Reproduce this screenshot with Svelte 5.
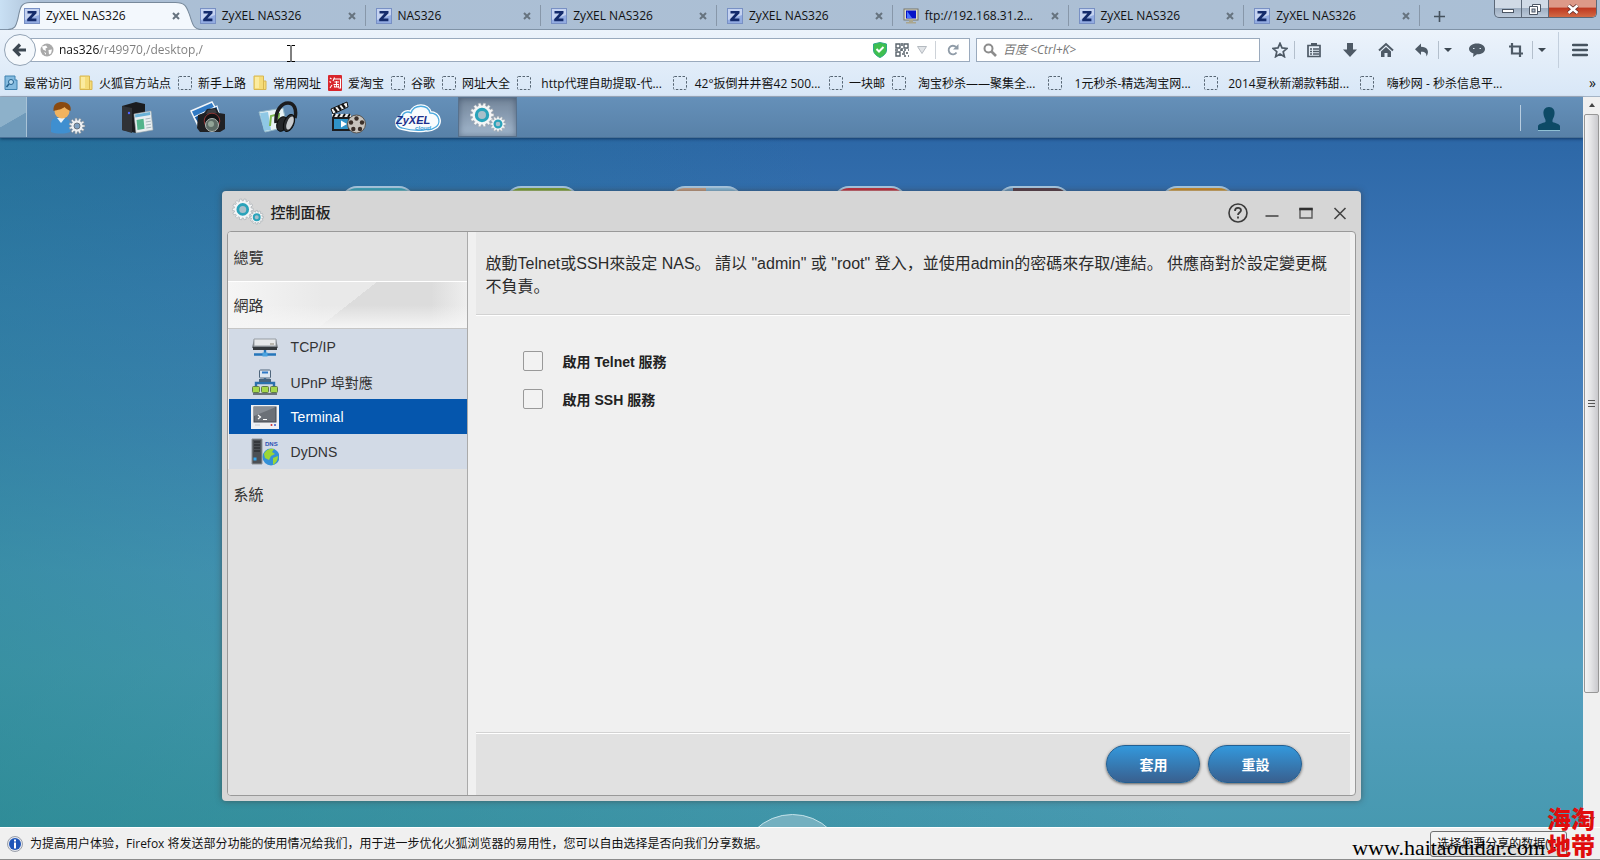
<script>
  const tabs = [
    { title: 'ZyXEL NAS326', icon: 'z' },
    { title: 'ZyXEL NAS326', icon: 'z' },
    { title: 'NAS326', icon: 'z' },
    { title: 'ZyXEL NAS326', icon: 'z' },
    { title: 'ZyXEL NAS326', icon: 'z' },
    { title: 'ftp://192.168.31.2...', icon: 'pc' },
    { title: 'ZyXEL NAS326', icon: 'z' },
    { title: 'ZyXEL NAS326', icon: 'z' }
  ];

  const bookmarks = [
    { label: '最常访问', icon: 'recent' },
    { label: '火狐官方站点', icon: 'folder' },
    { label: '新手上路', icon: 'blank' },
    { label: '常用网址', icon: 'folder' },
    { label: '爱淘宝', icon: 'tao' },
    { label: '谷歌', icon: 'blank' },
    { label: '网址大全', icon: 'blank' },
    { label: 'http代理自助提取-代...', icon: 'blank', wide: true },
    { label: '42°扳倒井井窖42 500...', icon: 'blank', wide: true },
    { label: '一块邮', icon: 'blank' },
    { label: '淘宝秒杀——聚集全...', icon: 'blank', wide: true },
    { label: '1元秒杀-精选淘宝网...', icon: 'blank', wide: true },
    { label: '2014夏秋新潮款韩甜...', icon: 'blank', wide: true },
    { label: '嗨秒网 - 秒杀信息平...', icon: 'blank', wide: true }
  ];

  const apps = [
    { id: 'users', name: '使用者' },
    { id: 'storage', name: '檔案' },
    { id: 'photo', name: '相片' },
    { id: 'music', name: '音樂' },
    { id: 'video', name: '影片' },
    { id: 'cloud', name: 'ZyXEL Cloud' },
    { id: 'gears', name: '控制面板' }
  ];

  const launchers = ['cyan', 'green', 'orange', 'red', 'dark', 'amber'];

  const networkItems = [
    { id: 'tcpip', label: 'TCP/IP' },
    { id: 'upnp', label: 'UPnP 埠對應' },
    { id: 'terminal', label: 'Terminal' },
    { id: 'dydns', label: 'DyDNS' }
  ];

  let address = 'nas326/r49970,/desktop,/';
  let search = '';
  let activeTab = 0;
  let activeApp = 'gears';
  let activeItem = 'terminal';
  let telnet = false;
  let ssh = false;

  function reset() {
    telnet = false;
    ssh = false;
  }

  // outline of a cog wheel with square-ish teeth
  function cog(cx, cy, outer, inner, teeth) {
    const step = (Math.PI * 2) / teeth;
    const points = [];
    for (let i = 0; i < teeth; i++) {
      const a = i * step;
      [[-0.34, inner], [-0.22, outer], [0.22, outer], [0.34, inner]].forEach(([k, r]) => {
        points.push((cx + Math.cos(a + k * step) * r).toFixed(2) + ' ' + (cy + Math.sin(a + k * step) * r).toFixed(2));
      });
    }
    return 'M' + points.join('L') + 'Z';
  }
</script>

<svelte:head>
  <title>ZyXEL NAS326</title>
</svelte:head>

{#snippet gears()}
  <svg class="gears" viewBox="0 0 36 32" aria-hidden="true">
    <path d={cog(12, 13, 12, 9.8, 14)} fill="#f4f5f6" stroke="#9aa3a9" stroke-width=".6" />
    <circle cx="12" cy="13" r="5.6" fill="#a9bfca" stroke="#2aa3ba" stroke-width="3.2" />
    <path d={cog(28, 22, 7.8, 6.1, 12)} fill="#f4f5f6" stroke="#9aa3a9" stroke-width=".6" />
    <circle cx="28" cy="22" r="3.4" fill="#a9bfca" stroke="#2aa3ba" stroke-width="2.2" />
  </svg>
{/snippet}

{#snippet favicon(kind)}
  {#if kind === 'z'}
    <svg class="fav" viewBox="0 0 16 16" aria-hidden="true">
      <rect x=".5" y=".5" width="15" height="15" fill="#93ace2" stroke="#7890c4" />
      <path d="M1 1h14v6L1 12z" fill="#c5d3f1" />
      <path d="M3.5 3h9v2.2L7.4 10.6h5v2.6H3.2V11l5.2-5.4H3.5z" fill="#142b6c" />
    </svg>
  {:else}
    <svg class="fav" viewBox="0 0 16 16" aria-hidden="true">
      <rect x="1" y="1" width="14" height="11" fill="#e2dfcb" stroke="#77766b" />
      <rect x="3" y="2.5" width="10" height="8" fill="#0713c8" />
      <path d="M4 3l5 7H4z" fill="#4c75ff" />
      <path d="M6 12h4v2h3v1.5H3V14h3z" fill="#aaa68e" />
    </svg>
  {/if}
{/snippet}

{#snippet bookmarkIcon(kind)}
  <svg class="bm-icon" viewBox="0 0 14 16" aria-hidden="true">
    {#if kind === 'recent'}
      <path d="M1 1h10v4h2v9.500H1z" fill="#84bbe0" stroke="#3f82b0" />
      <circle cx="7" cy="7" r="2.500" fill="#b9dcf2" stroke="#23618e" />
      <path d="M5 9l-2.500 3" stroke="#23618e" stroke-width="1.500" />
    {:else if kind === 'folder'}
      <path d="M1 1h9.500v5H13v8.500H1z" fill="#f5dc79" stroke="#d8b650" />
      <path d="M2 2h4v11H2z" fill="#fbeba0" />
      <path d="M10.500 6v8" stroke="#d8b650" />
    {:else if kind === 'tao'}
      <rect width="14" height="16" rx="1" fill="#d8262c" />
      <path d="M2 3l1.500 1M1.500 6.500l1.500 1M2 13l2-3M6.500 2.500L5 6M6 4h6.500v9h-2M6.500 7h4.500M5.500 9.500h5.500M8.500 6v6M6.500 10.500V12h4v-1.500" fill="none" stroke="#fff" stroke-width="1.100" />
    {:else}
      <rect x=".5" y="1.500" width="13" height="13" rx="1" fill="none" stroke="#566573" stroke-dasharray="2.500 1.500" />
    {/if}
  </svg>
{/snippet}

{#snippet appIcon(id)}
  {#if id === 'users'}
    <svg class="app-icon" viewBox="0 0 36 34" aria-hidden="true">
      <path d="M1 31V23c0-5 4-7 9-7s10 2 10 7v8c-5 2-14 2-19 0z" fill="#3f8fd0" />
      <path d="M7 17l4 5 4-5z" fill="#e9f4fc" />
      <circle cx="12" cy="10" r="7.500" fill="#f1b35f" />
      <path d="M3.500 10C3 3 7 1 12 1s10 3 8.500 9c-3-1-5-3-6-4-2 2-7 3-11 4z" fill="#8a4a10" />
      <path d={cog(27, 25, 8, 5.800, 11)} fill="#eef1f4" stroke="#7d8891" stroke-width=".6" />
      <circle cx="27" cy="25" r="3" fill="#7d9fc0" stroke="#69747e" />
    </svg>
  {:else if id === 'storage'}
    <svg class="app-icon" viewBox="0 0 36 34" aria-hidden="true">
      <path d="M2 5l14-4 9 2v25l-9 4-14-3z" fill="#1b1c1f" />
      <path d="M2 5l10 2v25L2 29z" fill="#303236" />
      <circle cx="9" cy="12" r="1.200" fill="#5166ff" />
      <path d="M14 13l17-3 2 19-17 3z" fill="#e9eef0" stroke="#9fa9ad" stroke-width=".6" />
      <path d="M15 13.500l15-2.600.3 3-15 2.600z" fill="#6ab1d6" />
      <path d="M16.500 19l7-1.200 1 10-7 1.200z" fill="#53b48b" />
      <path d="M25.500 18l5-.8M25.800 21l5-.8M26 24l5-.8M26.300 27l5-.8" stroke="#a9b8bd" />
    </svg>
  {:else if id === 'photo'}
    <svg class="app-icon" viewBox="0 0 36 34" aria-hidden="true">
      <path d="M1 10L22 1l5 9-19 15z" fill="#2f79c4" stroke="#f2f6fa" stroke-width="1.400" />
      <path d="M4 16L27 5l3 11-20 10z" fill="#175a9f" stroke="#f2f6fa" stroke-width="1.200" />
      <path d="M8 14l6-2 3-4 9-1 3 5 6 1v15l-5 3H10l-3-4z" fill="#202124" />
      <path d="M18 9l7-1 2 4-11 1z" fill="#3b3d41" />
      <circle cx="22" cy="20" r="7.800" fill="#121315" stroke="#8d3636" />
      <circle cx="22" cy="24" r="6.500" fill="#5d6b66" stroke="#b1b7b4" />
      <circle cx="21" cy="23" r="3" fill="#93a598" />
    </svg>
  {:else if id === 'music'}
    <svg class="app-icon wide" viewBox="0 0 40 34" aria-hidden="true">
      <path d="M1 11l24-4 4 19-22 5z" fill="#e9f3f6" stroke="#93b8c9" />
      <path d="M2 12l8-1 3 18-7 1z" fill="#8fc8e5" />
      <path d="M12 25l1-10 8-2-1 10" fill="none" stroke="#7db84f" stroke-width="2" />
      <path d="M18 22C17 9 24 2 30 2s9 6 7 15" fill="none" stroke="#1b1c1e" stroke-width="3.500" />
      <ellipse cx="24" cy="23" rx="5" ry="7.500" transform="rotate(20 24 23)" fill="#25272a" stroke="#0b0c0c" />
      <ellipse cx="31" cy="22" rx="5" ry="9" transform="rotate(22 31 22)" fill="#2a2c2f" stroke="#0b0c0c" />
      <ellipse cx="32" cy="22" rx="3" ry="7" transform="rotate(22 32 22)" fill="#c9cccf" />
    </svg>
  {:else if id === 'video'}
    <svg class="app-icon" viewBox="0 0 36 34" aria-hidden="true">
      <path d="M1 8L17 1l1 5L3 13z" fill="#f2f3f3" stroke="#111" />
      <path d="M4 7l3 4M8 5l3 4M12 3l3 4" stroke="#111" stroke-width="2.400" />
      <path d="M2 13h19v17H2z" fill="#1c1d1f" />
      <path d="M2 13h19v3H2z" fill="#efefef" />
      <path d="M5 13l-2 3M10 13l-2 3M15 13l-2 3M20 13l-2 3" stroke="#111" stroke-width="2" />
      <path d="M4 18h14v10H4z" fill="#2f93c8" />
      <path d="M11 19.500v7l6-3.500z" fill="#fff" />
      <circle cx="26.500" cy="23" r="9" fill="#c7c3bd" stroke="#5b5650" />
      <g fill="#3a2f29">
        <circle cx="26.500" cy="17.500" r="2.200" /><circle cx="21" cy="21.500" r="2.200" />
        <circle cx="32" cy="21.500" r="2.200" /><circle cx="23.300" cy="28" r="2.200" /><circle cx="30" cy="28" r="2.200" />
      </g>
    </svg>
  {:else if id === 'cloud'}
    <svg class="app-icon cloud" viewBox="0 0 46 30" aria-hidden="true">
      <path d="M7 25c-6-1-7-9 0-11 1-5 6-6 9-4 3-9 17-9 19 0 10 0 12 12 4 15-4 3-8 1-10 2-8 1-15 0-22-2z" fill="#f8fbfd" stroke="#fff" stroke-width="4" />
      <path d="M7 25c-6-1-7-9 0-11 1-5 6-6 9-4 3-9 17-9 19 0 10 0 12 12 4 15-4 3-8 1-10 2-8 1-15 0-22-2z" fill="#f8fbfd" stroke="#4ba9df" stroke-width="1.300" />
      <text x="1" y="21" class="zyxel">ZyXEL</text>
      <text x="20" y="27" class="zcloud">cloud</text>
    </svg>
  {:else}
    {@render gears()}
  {/if}
{/snippet}

{#snippet itemIcon(id)}
  <svg class="item-icon" viewBox="0 0 28 28" aria-hidden="true">
    {#if id === 'tcpip'}
      <path d="M3 6h22l2 9H1z" fill="#6c7379" />
      <path d="M3 6h22v7H3z" fill="#e6e8ea" stroke="#979da3" />
      <path d="M2 14h24v3H2z" fill="#33383d" />
      <path d="M19 11h4" stroke="#8b8574" />
      <path d="M14 17v4M3 21.500h9M16 21.500h9" stroke="#2476ba" stroke-width="2.400" />
      <rect x="11.500" y="19.500" width="5" height="4" fill="#4aa3e0" />
    {:else if id === 'upnp'}
      <path d="M14 9v7M5 19v-4h18v4" fill="none" stroke="#2c71ad" stroke-width="2.400" />
      <rect x="8.500" y="2" width="11" height="8" rx="1" fill="#dce7f2" stroke="#50667c" />
      <path d="M11 4.500h6" stroke="#2f79c6" stroke-width="2" />
      <path d="M8 11h12v3H8z" fill="#48647e" />
      <g fill="#a5d84b" stroke="#607b4a">
        <rect x="1.500" y="18.500" width="7" height="6" rx="1" /><rect x="10.500" y="18.500" width="7" height="6" rx="1" />
        <rect x="19.500" y="18.500" width="7" height="6" rx="1" />
      </g>
      <path d="M2 26h24" stroke="#6c757c" stroke-width="2" />
    {:else if id === 'terminal'}
      <rect y="2" width="28" height="24" fill="#eff1f4" />
      <rect x="3" y="4" width="22" height="15" fill="#6b7077" stroke="#454a52" />
      <path d="M3 4h22L3 13z" fill="#888d94" />
      <path d="M7 12l2.500 2L7 16M12 16.500h4" fill="none" stroke="#fff" stroke-width="1.200" />
      <circle cx="20.500" cy="22" r="1" fill="#d12f2f" /><circle cx="24" cy="22" r="1" fill="#3657c9" />
      <path d="M4 22h5" stroke="#c9cdd4" />
    {:else}
      <path d="M1 1h10v25H1z" fill="#4c5055" stroke="#8c9298" />
      <path d="M3 4h6M3 7h6M3 10h6M3 13h6" stroke="#1f2124" />
      <rect x="2.500" y="19.500" width="3" height="3" fill="#37a6ee" />
      <circle cx="20" cy="19" r="8.500" fill="#3390d8" />
      <path d="M13 16c2-5 7-6 10-5l-2 3 3 2-4 2-2 4-4-2zM22 20l5-2c0 4-2 7-5 9z" fill="#9bd636" />
      <text x="14" y="8" class="dns">DNS</text>
    {/if}
  </svg>
{/snippet}

<div class="browser">
  <header class="chrome">
    <div class="tabstrip">
      {#each tabs as tab, i}
        <div class="tab" class:active={i === activeTab}>
          {#if i === activeTab}
            <svg class="tab-shape" viewBox="0 0 192 29" preserveAspectRatio="none" aria-hidden="true">
              <path d="M0 28.500C8 28 8 24 10 17C12 6 13 1.500 22 1.500H166C176 1.500 177 6 180 14C183 24 184 28.500 192 28.500" fill="#f3f8fd" stroke="#77899b" />
            </svg>
          {/if}
          <button class="tab-title" on:click={() => (activeTab = i)}>
            {@render favicon(tab.icon)}
            <span>{tab.title}</span>
          </button>
          <button class="tab-close" aria-label="关闭标签页">
            <svg viewBox="0 0 8 8" width="8" height="8"><path d="M1 1l6 6M7 1L1 7" stroke="#66737f" stroke-width="2" /></svg>
          </button>
        </div>
      {/each}
      <div class="strip-end">
        <button class="new-tab" aria-label="打开新标签页">
          <svg viewBox="0 0 11 11" width="11" height="11"><path d="M5.500 0v11M0 5.500h11" stroke="#45525e" stroke-width="1.600" /></svg>
        </button>
        <div class="win-buttons">
          <button aria-label="最小化">
            <svg viewBox="0 0 14 14" width="14" height="14"><rect x="1.500" y="7.500" width="11" height="3" fill="#fff" stroke="#4b5563" /></svg>
          </button>
          <button aria-label="还原">
            <svg viewBox="0 0 14 14" width="14" height="14"><path d="M4.500 2.500h8v7h-8z" fill="#fff" stroke="#4b5563" /><path d="M1.500 4.500h8v8h-8z" fill="#fff" stroke="#4b5563" /><rect x="4" y="7" width="3" height="3" fill="#b7c4d4" stroke="#4b5563" /></svg>
          </button>
          <button class="quit" aria-label="关闭">
            <svg viewBox="0 0 14 14" width="14" height="14"><path d="M2.500 3.500l9 7.500M11.500 3.500l-9 7.500" stroke="#5c2b28" stroke-width="4.200" /><path d="M2.500 3.500l9 7.500M11.500 3.500l-9 7.500" stroke="#fff" stroke-width="2.600" /></svg>
          </button>
        </div>
      </div>
    </div>

    <div class="navbar">
      <button class="back" aria-label="后退">
        <svg viewBox="0 0 16 16" width="16" height="16"><path d="M14 8H3M8 2.500L2.500 8 8 13.500" fill="none" stroke="#3d4852" stroke-width="3.200" /></svg>
      </button>
      <div class="urlbar">
        <svg viewBox="0 0 14 14" width="14" height="14" aria-hidden="true">
          <circle cx="7" cy="7" r="6.500" fill="#a9a9a9" />
          <path d="M2 3.500l4-1 1.500 2-2 1 .5 2.500-3-1.500zM8.500 7l3.500-.5-1 4-2 1zM4 9l2 1v2z" fill="#fff" />
        </svg>
        <input class="address" type="text" aria-label="地址" bind:value={address} />
        <svg viewBox="0 0 14 16" width="14" height="16" aria-hidden="true">
          <path d="M7 .5l6.500 1.500V8c0 3.500-3 6-6.500 7.500C3.500 14 .5 11.500 .5 8V2z" fill="#3fbf4f" stroke="#2fa98b" />
          <path d="M3.500 7L6 9.500 10.500 5" fill="none" stroke="#fff" stroke-width="2" />
        </svg>
        <svg class="qr" viewBox="0 0 14 14" width="14" height="14" aria-hidden="true">
          <path d="M1 1h4v4H1zM9 1h4v4H9zM1 9h4v4H1z" fill="none" stroke="#59636b" stroke-width="1.400" />
          <path d="M7 0v3M7 5v3M0 7h3M5 7h2M9 7h2M13 7h1M8 9h2M12 9v2M7 11h3M9 13h2M13 13h1" stroke="#59636b" stroke-width="1.600" />
        </svg>
        <svg viewBox="0 0 10 8" width="10" height="8" aria-hidden="true"><path d="M.5.5h9L5 7.500z" fill="#e1e4e7" stroke="#b4bac0" /></svg>
        <button class="reload" aria-label="刷新">
          <svg viewBox="0 0 12 12" width="12" height="12"><path d="M9.500 8.500A4.300 4.300 0 1 1 9 3" fill="none" stroke="#8f9ba7" stroke-width="1.800" /><path d="M11.500 0v5.500H6z" fill="#8f9ba7" /></svg>
        </button>
      </div>
      <div class="searchbar">
        <svg viewBox="0 0 14 14" width="14" height="14" aria-hidden="true"><circle cx="5.500" cy="5.500" r="4" fill="none" stroke="#8c8c8c" stroke-width="2" /><path d="M8.500 8.500l4.500 4.500" stroke="#8c8c8c" stroke-width="2.600" /></svg>
        <input type="text" aria-label="搜索" placeholder="百度 <Ctrl+K>" bind:value={search} />
      </div>
      <div class="tools">
        <button class="star ruled" aria-label="收藏"><svg viewBox="0 0 16 16"><path d="M8 1.300l2 4.600 5 .5-3.800 3.300 1.200 5L8 12.100l-4.400 2.600 1.200-5L1 6.400l5-.5z" fill="none" stroke="#4e5a66" stroke-width="1.700" /></svg></button>
        <button aria-label="书签"><svg viewBox="0 0 16 16"><path d="M2 3.500h12v11H2z" fill="none" stroke="#4e5a66" stroke-width="1.700" /><path d="M5 1h6v3H5z" fill="#4e5a66" /><path d="M4 7h2M7 7h6M4 9.500h2M7 9.500h6M4 12h2M7 12h6" stroke="#4e5a66" stroke-width="1.300" /></svg></button>
        <button aria-label="下载"><svg viewBox="0 0 16 16"><path d="M5 1h6v6.500h4L8 15 1 7.500h4z" fill="#4e5a66" /></svg></button>
        <button aria-label="主页"><svg viewBox="0 0 16 16"><path d="M1 8.500L8 2l7 6.500" fill="none" stroke="#4e5a66" stroke-width="2" /><path d="M3 9.500L8 5l5 4.500V15H9.500v-4h-3v4H3z" fill="#4e5a66" /></svg></button>
        <button class="ruled" aria-label="撤销"><svg viewBox="0 0 16 16"><path d="M7 1.500v3.300c6 0 9 4 5.500 9.700C12.500 11 11 9.600 7 9.800V13L1 7.200z" fill="#4e5a66" /></svg></button>
        <button class="caret" aria-label="更多撤销"><svg viewBox="0 0 16 16"><path d="M4 6h8l-4 4z" fill="#3d4852" /></svg></button>
        <button class="chat" aria-label="聊天"><svg viewBox="0 0 16 16"><path d="M8 1.500c5 0 8 2.500 8 5.500 0 3.500-4 5.500-8 5.300L4 15l.5-3.500C2 10.500 0 9 0 7c0-3 3-5.500 8-5.500z" fill="#4e5a66" /><path d="M4 6.500h1.500M10.500 6.500H12" stroke="#dbe7f3" /></svg></button>
        <button class="ruled" aria-label="截图"><svg viewBox="0 0 16 16"><path d="M4 1v10.500h11M1 4.500h11V15" fill="none" stroke="#4e5a66" stroke-width="2.200" /></svg></button>
        <button class="caret" aria-label="更多截图"><svg viewBox="0 0 16 16"><path d="M4 6h8l-4 4z" fill="#3d4852" /></svg></button>
        <button class="menu" aria-label="菜单"><svg viewBox="0 0 16 16"><path d="M1 3h14M1 8h14M1 13h14" stroke="#46535f" stroke-width="2.400" stroke-linecap="round" /></svg></button>
      </div>
      <svg class="ibeam" viewBox="0 0 8 17" width="8" height="17" aria-hidden="true"><path d="M0 .5h3.500M4.500.5H8M4 1v15M0 16.500h3.500M4.500 16.500H8" stroke="#000" /></svg>
    </div>

    <nav class="bookmarks">
      {#each bookmarks as b}
        <a href="#bookmark" class="bookmark" class:wide={b.wide}>
          {@render bookmarkIcon(b.icon)}
          <span>{b.label}</span>
        </a>
      {/each}
      <button class="more" aria-label="更多书签">»</button>
    </nav>
  </header>

  <div class="viewport">
    <main class="nas">
      <div class="taskbar">
        <button class="show-desktop" aria-label="顯示桌面"></button>
        <div class="apps">
          {#each apps as app}
            <button class="app" class:active={activeApp === app.id} aria-label={app.name} on:click={() => (activeApp = app.id)}>
              {@render appIcon(app.id)}
            </button>
          {/each}
        </div>
        <button class="account" aria-label="帳號">
          <svg viewBox="0 0 22 24" width="22" height="24"><path d="M11 0c4 0 6 3 5.500 7-.3 3-1.500 4-2 6v2c3 1 7 2 7.500 4v4H0v-4c.5-2 4.500-3 7.500-4v-2c-.5-2-1.700-3-2-6C5 3 7 0 11 0z" fill="#0d4a66" /><path d="M0 23.500h22" stroke="#8fc0d4" /></svg>
        </button>
      </div>

      <div class="desktop">
        <div class="launchers">
          {#each launchers as color}
            <span class="launcher {color}"></span>
          {/each}
        </div>

        <section class="window">
          <div class="titlebar">
            {@render gears()}
            <h1>控制面板</h1>
            <div class="controls">
              <button aria-label="說明"><svg viewBox="0 0 20 20"><circle cx="10" cy="10" r="9" fill="none" stroke="#3b3b3b" stroke-width="1.600" /><path d="M7 8c0-4 6-4 6-.7 0 2.200-3 2.200-3 4.700M10 13.500V15.500" fill="none" stroke="#3b3b3b" stroke-width="1.800" /></svg></button>
              <button aria-label="最小化"><svg viewBox="0 0 20 20"><path d="M3.500 13h13" stroke="#4a4a4a" stroke-width="1.600" /></svg></button>
              <button aria-label="最大化"><svg viewBox="0 0 20 20"><path d="M4 6h12v9H4z" fill="none" stroke="#5a5a5a" stroke-width="1.400" /><path d="M3.300 6h13.400" stroke="#2f2f2f" stroke-width="2.600" /></svg></button>
              <button aria-label="關閉"><svg viewBox="0 0 20 20"><path d="M4.500 5l11 11M15.500 5l-11 11" stroke="#444" stroke-width="1.600" /></svg></button>
            </div>
          </div>

          <div class="body">
            <aside class="sidebar">
              <button class="group">總覽</button>
              <button class="group open">網路</button>
              <ul>
                {#each networkItems as item}
                  <li>
                    <button class="item" class:active={activeItem === item.id} on:click={() => (activeItem = item.id)}>
                      {@render itemIcon(item.id)}
                      {item.label}
                    </button>
                  </li>
                {/each}
              </ul>
              <button class="group">系統</button>
            </aside>

            <form class="content" on:submit|preventDefault>
              <p class="description">啟動Telnet或SSH來設定 NAS。 請以 "admin" 或 "root" 登入，並使用admin的密碼來存取/連結。 供應商對於設定變更概不負責。</p>
              <div class="fields">
                <label><input type="checkbox" bind:checked={telnet} />啟用 Telnet 服務</label>
                <label><input type="checkbox" bind:checked={ssh} />啟用 SSH 服務</label>
              </div>
              <div class="actions">
                <button type="submit">套用</button>
                <button type="button" on:click={reset}>重設</button>
              </div>
            </form>
          </div>
        </section>

        <span class="dock"></span>
      </div>
    </main>

    <div class="scrollbar" aria-hidden="true">
      <svg viewBox="0 0 16 16" width="16" height="16"><path d="M5 10l3-4 3 4z" fill="#444" /></svg>
      <div class="track"><div class="thumb"><i></i><i></i><i></i></div></div>
      <svg viewBox="0 0 16 16" width="16" height="16"><path d="M5 6l3 4 3-4z" fill="#444" /></svg>
    </div>
  </div>

  <footer class="notice">
    <svg viewBox="0 0 16 16" width="16" height="16" aria-hidden="true">
      <circle cx="8" cy="8" r="7.500" fill="#e8eaf0" stroke="#9ba0aa" /><circle cx="8" cy="8" r="6" fill="#1e55b8" />
      <path d="M8 3.500v2M8 6.500v6" stroke="#fff" stroke-width="2" />
    </svg>
    <p>为提高用户体验，Firefox 将发送部分功能的使用情况给我们，用于进一步优化火狐浏览器的易用性，您可以自由选择是否向我们分享数据。</p>
    <button>选择您要分享的数据(C)</button>
  </footer>

  <div class="watermark">
    <span class="site">www.haitaodidar.com</span>
    <span class="seal">海淘地带</span>
  </div>
</div>

<style>
  :global(body) {
    margin: 0;
  }

  .browser {
    position: relative;
    display: flex;
    flex-direction: column;
    min-height: 100vh;
    overflow: hidden;
    font-family: "Open Sans", "Noto Sans CJK SC", sans-serif;
    font-size: 12px;
    color: #111;
  }

  .browser * {
    box-sizing: border-box;
  }

  button {
    border: none;
    background: none;
    padding: 0;
    font: inherit;
    color: inherit;
    display: flex;
    align-items: center;
    justify-content: center;
  }

  input {
    font: inherit;
  }

  svg {
    flex: none;
    display: block;
  }

  /* browser chrome */
  .chrome {
    background: linear-gradient(#ecf3fb 30px, #d8e7f7);
    border-bottom: 1px solid #a5b4c5;
  }

  .tabstrip {
    display: flex;
    height: 30px;
    padding-left: 14px;
    background: linear-gradient(90deg, #c9e0f4, #abbfd5 40px, #acbfd4 80%, #a9bfd6);
    border-bottom: 1px solid #8093a7;
  }

  .tab {
    position: relative;
    display: flex;
    flex: 1;
    min-width: 0;
    align-items: center;
    padding: 2px 10px 0;
  }

  .tab:not(.active)::after {
    content: '';
    position: absolute;
    right: 0;
    top: 5px;
    height: 21px;
    border-right: 1px solid #8797a9;
  }

  .tab-shape {
    position: absolute;
    left: -6px;
    top: 1px;
    width: calc(100% + 18px);
    height: 29px;
  }

  .tab-title {
    position: relative;
    flex: 1;
    min-width: 0;
    justify-content: flex-start;
    gap: 6px;
    white-space: nowrap;
  }

  .tab-close {
    position: relative;
    width: 8px;
  }

  .fav {
    width: 16px;
    height: 16px;
  }

  .strip-end {
    display: flex;
    justify-content: space-between;
    align-items: flex-start;
    width: 180px;
    padding: 0 3px 0 14px;
  }

  .new-tab {
    height: 32px;
  }

  .win-buttons {
    display: flex;
    height: 18px;
    border: 1px solid #5b6878;
    border-top: none;
    border-radius: 0 0 5px 5px;
    overflow: hidden;
    background: linear-gradient(#d0dae6 45%, #9fafc2 50%, #bccada);
  }

  .win-buttons button {
    width: 27px;
    border-right: 1px solid #5b6878;
  }

  .win-buttons .quit {
    width: 47px;
    border-right: none;
    background: linear-gradient(#dd9988 40%, #bf3a22 50%, #d26a45);
  }

  .navbar {
    position: relative;
    display: flex;
    align-items: center;
    height: 41px;
    padding: 0 0 2px 4px;
  }

  .back {
    position: relative;
    z-index: 1;
    width: 32px;
    height: 32px;
    border: 1px solid #93a3b5;
    border-radius: 50%;
    background: #f4f8fc;
  }

  .urlbar,
  .searchbar {
    display: flex;
    align-items: center;
    height: 24px;
    background: #fff;
    border: 1px solid #9aaabd;
  }

  .urlbar {
    flex: 1;
    gap: 8px;
    margin-left: -8px;
    padding-left: 11px;
  }

  .searchbar {
    width: 284px;
    gap: 6px;
    margin-left: 6px;
    padding: 0 6px;
  }

  .urlbar input,
  .searchbar input {
    flex: 1;
    min-width: 0;
    border: none;
    outline: none;
    padding: 0;
    background: none;
  }

  /* host name is dark, the path after it is grey */
  .urlbar .address {
    margin-left: -3px;
    color: transparent;
    caret-color: #111;
    background: linear-gradient(90deg, #111 41px, #7c7c7c 41px);
    background-clip: text;
    -webkit-background-clip: text;
  }

  .searchbar input::placeholder {
    color: #777;
    font-style: italic;
    opacity: 1;
  }

  .reload {
    width: 34px;
    height: 18px;
    border-left: 1px solid #cdd2d8;
  }

  .tools {
    display: flex;
    align-items: center;
    padding-left: 4px;
  }

  .tools button {
    position: relative;
    width: 36px;
    height: 36px;
  }

  .tools svg {
    width: 16px;
    height: 16px;
  }

  .tools .star {
    width: 32px;
  }

  .tools .caret {
    width: 16px;
  }

  .tools .chat {
    width: 42px;
  }

  .tools .menu {
    width: 42px;
    margin-left: 8px;
    border-left: 1px solid #c3cfdd;
  }

  .tools .ruled::after {
    content: '';
    position: absolute;
    right: 1px;
    top: 9px;
    height: 18px;
    border-right: 1px solid #b3bfcc;
  }

  .ibeam {
    position: absolute;
    left: 287px;
    top: 15px;
  }

  .bookmarks {
    display: flex;
    align-items: center;
    height: 25px;
    padding: 0 4px 2px;
  }

  .bookmark {
    display: flex;
    align-items: center;
    gap: 6px;
    padding-right: 7px;
    color: #111;
    text-decoration: none;
    white-space: nowrap;
  }

  .bookmark.wide {
    width: 156px;
  }

  .bookmark.wide span {
    flex: 1;
    text-align: center;
  }

  .bm-icon {
    width: 14px;
    height: 16px;
  }

  .more {
    margin-left: auto;
    font-size: 14px;
  }

  /* page */
  .viewport {
    display: flex;
    flex: 1;
  }

  .nas {
    display: flex;
    flex: 1;
    flex-direction: column;
    min-width: 0;
    background:
      linear-gradient(60deg, rgba(24, 128, 128, 0.5), rgba(24, 122, 128, 0) 60%),
      linear-gradient(#2c67a6 5%, #3d77b8 27%, #4783bf 45%, #5599c6 65%, #559fc0 78%, #4799b0);
    font-family: "Liberation Sans", "Noto Sans CJK TC", sans-serif;
    color: #333;
  }

  .taskbar {
    display: flex;
    height: 41px;
    background: linear-gradient(#6590b9, #5881a8);
    border-bottom: 1px solid #4a7196;
    box-shadow: 0 1px 3px rgba(0, 25, 60, 0.6);
  }

  .show-desktop {
    width: 27px;
    background: linear-gradient(150deg, #8db1ca 55%, #6f9aba 56%);
    border-right: 1px solid #a9c3d7;
  }

  .apps {
    display: flex;
    flex: 1;
    gap: 11px;
    padding-left: 11px;
  }

  .app {
    width: 59px;
    padding-top: 2px;
  }

  .app.active {
    background: linear-gradient(#73859a, #a2b7cd);
    border: 1px solid #58718c;
    box-shadow: inset 0 0 6px rgba(30, 50, 75, 0.5);
  }

  .app-icon {
    width: 36px;
    height: 34px;
  }

  .app-icon.wide {
    width: 40px;
  }

  .app-icon.cloud {
    width: 46px;
    height: 30px;
  }

  .zyxel {
    font: italic bold 11px "Liberation Sans", sans-serif;
    fill: #1c2f8c;
  }

  .zcloud {
    font: italic bold 6px "Liberation Sans", sans-serif;
    fill: #3b9fd8;
  }

  .gears {
    width: 36px;
    height: 32px;
  }

  .account {
    position: relative;
    width: 68px;
    padding-top: 4px;
  }

  .account::before {
    content: '';
    position: absolute;
    left: 5px;
    top: 8px;
    height: 26px;
    border-left: 1px solid #b8cde0;
  }

  .desktop {
    position: relative;
    display: flex;
    flex: 1;
    padding: 53px 14% 26px;
    overflow: hidden;
  }

  .launchers {
    position: absolute;
    left: 0;
    right: 8px;
    top: 48px;
    display: flex;
    justify-content: center;
    gap: 90px;
  }

  .launcher {
    width: 74px;
    height: 74px;
    border: 2px solid #a9c9e2;
    border-radius: 16px;
  }

  .cyan { background: linear-gradient(#3fa9c0 2px, #a5dbe5 3px); }
  .green { background: linear-gradient(#7da336 2px, #c6da9a 3px); }
  .orange { background: linear-gradient(90deg, #c9a184 50%, #8bbcdb 50%); }
  .red { background: linear-gradient(#c5303f 2px, #eba3ab 3px); }
  .dark { background: linear-gradient(90deg, #6d9cc4 20%, #5a3f4a 20%); }
  .amber { background: linear-gradient(#d0932c 2px, #f0d9a8 3px); }

  .dock {
    position: absolute;
    left: 50%;
    bottom: -94px;
    width: 107px;
    height: 107px;
    margin-left: -53px;
    border: 1px solid #c4e3ea;
    border-radius: 50%;
    background: #74b0c0;
  }

  .window {
    position: relative;
    z-index: 1;
    display: flex;
    flex: 1;
    flex-direction: column;
    min-width: 0;
    padding: 0 5px 5px;
    border-radius: 4px;
    background: #d6d6d6;
    box-shadow: 0 0 6px rgba(60, 60, 60, 0.6);
  }

  .titlebar {
    display: flex;
    align-items: center;
    gap: 7px;
    height: 40px;
    padding: 2px 2px 0 5px;
  }

  .titlebar .gears {
    width: 32px;
    height: 28px;
  }

  .titlebar h1 {
    flex: 1;
    margin: 0;
    padding-bottom: 2px;
    font-size: 15px;
    font-weight: 500;
    color: #222;
  }

  .controls {
    display: flex;
    gap: 14px;
    padding: 2px 4px 0 0;
  }

  .controls svg {
    width: 20px;
    height: 20px;
  }

  .body {
    display: flex;
    flex: 1;
    border: 1px solid #999;
    border-radius: 4px;
    background: #f0f0f0;
    overflow: hidden;
  }

  .sidebar {
    width: 240px;
    background: #e1e1e1;
    border-right: 1px solid #aaa;
  }

  .group {
    width: 100%;
    height: 49px;
    justify-content: flex-start;
    padding: 0 6px;
    font-size: 15px;
  }

  .group.open {
    height: 48px;
    padding-bottom: 2px;
    border-top: 1px solid #fff;
    border-bottom: 1px solid #c6c6c6;
    background:
      linear-gradient(rgba(247, 247, 247, 0) 50%, #f5f5f5),
      linear-gradient(90deg, #f5f5f5, rgba(245, 245, 245, 0) 40%, rgba(245, 245, 245, 0) 85%, #eee),
      linear-gradient(142deg, #e9e9e9 50%, #dcdcdc 50%);
  }

  ul {
    margin: 0;
    padding: 0 0 0 1px;
    list-style: none;
    background: #f0f0f0;
  }

  .item {
    width: 100%;
    height: 35px;
    justify-content: flex-start;
    gap: 12px;
    padding-left: 22px;
    background: #d2dae6;
    font-size: 14px;
  }

  .item.active {
    background: #0556ad;
    color: #fff;
  }

  .item-icon {
    width: 28px;
    height: 28px;
  }

  .dns {
    font: bold 6px "Liberation Sans", sans-serif;
    fill: #2b4fb5;
  }

  .content {
    display: flex;
    flex: 1;
    flex-direction: column;
    min-width: 0;
    padding: 0 5px 0 8px;
  }

  .description {
    margin: 0;
    min-height: 83px;
    padding: 20px 10px 16px;
    background: #e8e8e8;
    border-bottom: 1px solid #d2d2d2;
    box-shadow: 0 1px #fff;
    font-family: "Liberation Sans", "Noto Sans CJK SC", sans-serif;
    font-size: 16px;
    line-height: 23px;
    color: #2b2b2b;
  }

  .fields {
    display: flex;
    flex: 1;
    flex-direction: column;
    gap: 14px;
    padding: 34px 47px;
  }

  .fields label {
    display: flex;
    align-items: center;
    gap: 20px;
    height: 24px;
    font-size: 14px;
    font-weight: bold;
    color: #222;
  }

  .fields input {
    appearance: none;
    width: 20px;
    height: 20px;
    margin: 0;
    border: 1px solid #999;
    border-radius: 2px;
    background: #f2f2f2;
  }

  .fields input:checked {
    background: #0556ad;
  }

  .actions {
    display: flex;
    justify-content: flex-end;
    gap: 8px;
    padding: 11px 48px 12px;
    background: #e1e1e1;
    border-top: 1px solid #fff;
    box-shadow: 0 -1px #d2d2d2;
  }

  .actions button {
    width: 94px;
    height: 38px;
    border: 1px solid #225f92;
    border-radius: 19px;
    background: linear-gradient(#3398dc, #39608f);
    box-shadow: 0 1px 3px rgba(0, 0, 0, 0.6);
    font-size: 14px;
    font-weight: bold;
    color: #fff;
  }

  .scrollbar {
    display: flex;
    flex-direction: column;
    width: 17px;
    padding-left: 1px;
    background: #f0f0f0;
  }

  .track {
    flex: 1;
    padding-top: 1px;
  }

  .thumb {
    display: flex;
    flex-direction: column;
    align-items: center;
    justify-content: center;
    gap: 1px;
    width: 15px;
    height: 83%;
    border: 1px solid #979797;
    border-radius: 2px;
    background: linear-gradient(90deg, #f5f5f5, #e4e4e6 45%, #c9c9cd);
  }

  .thumb i {
    width: 7px;
    height: 2px;
    border-bottom: 1px solid #555;
  }

  /* data sharing bar */
  .notice {
    display: flex;
    align-items: center;
    gap: 7px;
    height: 33px;
    padding: 0 33px 0 7px;
    background: #f0f0f0;
    border-top: 1px solid #fff;
    border-bottom: 1px solid #8c8c8c;
  }

  .notice p {
    flex: 1;
    margin: 0;
    padding-bottom: 2px;
  }

  .notice button {
    width: 137px;
    height: 26px;
    padding-bottom: 2px;
    border: 1px solid #707070;
    border-radius: 3px;
    background: linear-gradient(#f3f3f3 50%, #dedede 50%);
    white-space: nowrap;
  }

  .watermark {
    position: absolute;
    right: 3px;
    bottom: 2px;
    z-index: 2;
    display: flex;
    align-items: flex-end;
    gap: 2px;
    pointer-events: none;
  }

  .site {
    font-family: "Liberation Serif", serif;
    font-size: 22px;
    line-height: 20px;
    color: #000;
  }

  .seal {
    width: 50px;
    font-family: "Noto Sans CJK SC", sans-serif;
    font-size: 24px;
    font-weight: 900;
    line-height: 27px;
    color: #e00d0d;
  }
</style>
